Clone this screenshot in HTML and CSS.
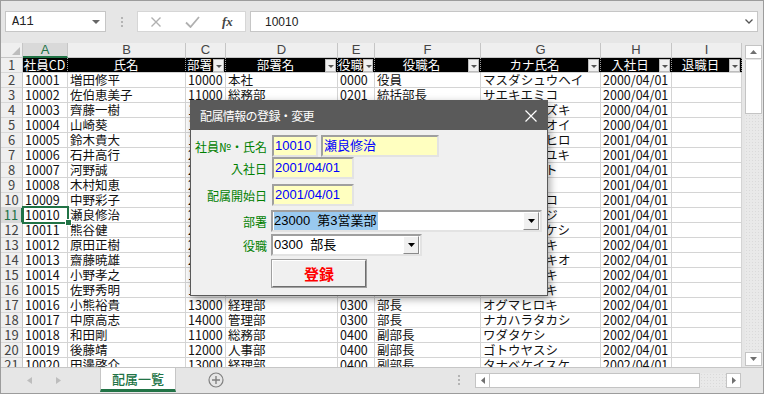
FILE: index.html
```html
<!DOCTYPE html>
<html lang="ja">
<head>
    <meta charset="UTF-8">
    <title>配属一覧</title>
    <link rel="stylesheet" href="styles.css">
</head>
<body>
<div class="app">
    <!-- formula bar -->
    <div class="formula-bar">
        <div class="name-box">
            <span>A11</span>
            <svg width="8" height="4" viewBox="0 0 8 4"><path d="M0 0h8L4 4z" fill="#666"/></svg>
        </div>
        <div class="grip"><i></i><i></i><i></i></div>
        <div class="fx-buttons">
            <svg width="12" height="10" viewBox="0 0 12 10"><path d="M1.5 0.5l9 9M10.5 0.5l-9 9" stroke="#b0b0b0" stroke-width="1.4" fill="none"/></svg>
            <svg width="15" height="12" viewBox="0 0 15 12"><path d="M1 6.5l4.5 4.5L14 1" stroke="#b0b0b0" stroke-width="1.8" fill="none"/></svg>
            <span class="fx">fx</span>
        </div>
        <div class="formula-input">
            <span>10010</span>
            <svg width="8" height="5" viewBox="0 0 8 5"><path d="M0.5 0.5l3.5 3.5 3.5-3.5" stroke="#555" stroke-width="1.3" fill="none"/></svg>
        </div>
    </div>

    <!-- sheet -->
    <div class="sheet">
        <div class="grid">
            <div class="row col-hdr">
                <div class="corner"><svg width="8" height="8" viewBox="0 0 8 8"><path d="M8 0v8H0z" fill="#bdbdbd"/></svg></div>
                <div class="on">A</div><div>B</div><div>C</div><div>D</div><div>E</div><div>F</div><div>G</div><div>H</div><div>I</div>
            </div>
            <div class="row title-row">
                <div class="rh">1</div>
                <div><span>社員CD</span></div>
                <div><span>氏名</span></div>
                <div><span>部署</span><b class="flt"></b></div>
                <div><span>部署名</span><b class="flt"></b></div>
                <div><span>役職</span><b class="flt"></b></div>
                <div><span>役職名</span><b class="flt"></b></div>
                <div><span>カナ氏名</span><b class="flt"></b></div>
                <div><span>入社日</span><b class="flt"></b></div>
                <div><span>退職日</span><b class="flt"></b></div>
            </div>
            <div class="row"><div class="rh">2</div><div>10001</div><div>増田修平</div><div>10000</div><div>本社</div><div>0000</div><div>役員</div><div>マスダシュウヘイ</div><div>2000/04/01</div><div></div></div>
            <div class="row"><div class="rh">3</div><div>10002</div><div>佐伯恵美子</div><div>11000</div><div>総務部</div><div>0201</div><div>統括部長</div><div>サエキエミコ</div><div>2000/04/01</div><div></div></div>
            <!-- rows 4-16: columns D-F lie under the form -->
            <div class="row"><div class="rh">4</div><div>10003</div><div>齊藤一樹</div><div>12000</div><div></div><div></div><div></div><div>サイトウカズキ</div><div>2000/04/01</div><div></div></div>
            <div class="row"><div class="rh">5</div><div>10004</div><div>山崎葵</div><div>13000</div><div></div><div></div><div></div><div>ヤマザキアオイ</div><div>2000/04/01</div><div></div></div>
            <div class="row"><div class="rh">6</div><div>10005</div><div>鈴木貴大</div><div>14000</div><div></div><div></div><div></div><div>スズキタカヒロ</div><div>2001/04/01</div><div></div></div>
            <div class="row"><div class="rh">7</div><div>10006</div><div>石井高行</div><div>21000</div><div></div><div></div><div></div><div>イシイタカユキ</div><div>2001/04/01</div><div></div></div>
            <div class="row"><div class="rh">8</div><div>10007</div><div>河野誠</div><div>22000</div><div></div><div></div><div></div><div>コウノマコト</div><div>2001/04/01</div><div></div></div>
            <div class="row"><div class="rh">9</div><div>10008</div><div>木村知恵</div><div>23000</div><div></div><div></div><div></div><div>キムラチエ</div><div>2001/04/01</div><div></div></div>
            <div class="row"><div class="rh">10</div><div>10009</div><div>中野彩子</div><div>21000</div><div></div><div></div><div></div><div>ナカノアヤコ</div><div>2001/04/01</div><div></div></div>
            <div class="row"><div class="rh on">11</div><div class="sel">10010</div><div>瀬良修治</div><div>23000</div><div></div><div></div><div></div><div>セラシュウジ</div><div>2001/04/01</div><div></div></div>
            <div class="row"><div class="rh">12</div><div>10011</div><div>熊谷健</div><div>22000</div><div></div><div></div><div></div><div>クマガイタケシ</div><div>2001/04/01</div><div></div></div>
            <div class="row"><div class="rh">13</div><div>10012</div><div>原田正樹</div><div>21000</div><div></div><div></div><div></div><div>ハラダマサキ</div><div>2002/04/01</div><div></div></div>
            <div class="row"><div class="rh">14</div><div>10013</div><div>齋藤暁雄</div><div>22000</div><div></div><div></div><div></div><div>サイトウアキオ</div><div>2002/04/01</div><div></div></div>
            <div class="row"><div class="rh">15</div><div>10014</div><div>小野孝之</div><div>11000</div><div></div><div></div><div></div><div>オノタカユキ</div><div>2002/04/01</div><div></div></div>
            <div class="row"><div class="rh">16</div><div>10015</div><div>佐野秀明</div><div>12000</div><div></div><div></div><div></div><div>サノヒデアキ</div><div>2002/04/01</div><div></div></div>
            <div class="row"><div class="rh">17</div><div>10016</div><div>小熊裕貴</div><div>13000</div><div>経理部</div><div>0300</div><div>部長</div><div>オグマヒロキ</div><div>2002/04/01</div><div></div></div>
            <div class="row"><div class="rh">18</div><div>10017</div><div>中原高志</div><div>14000</div><div>管理部</div><div>0300</div><div>部長</div><div>ナカハラタカシ</div><div>2002/04/01</div><div></div></div>
            <div class="row"><div class="rh">19</div><div>10018</div><div>和田剛</div><div>11000</div><div>総務部</div><div>0400</div><div>副部長</div><div>ワダタケシ</div><div>2002/04/01</div><div></div></div>
            <div class="row"><div class="rh">20</div><div>10019</div><div>後藤靖</div><div>12000</div><div>人事部</div><div>0400</div><div>副部長</div><div>ゴトウヤスシ</div><div>2002/04/01</div><div></div></div>
            <div class="row"><div class="rh">21</div><div>10020</div><div>田邊啓介</div><div>13000</div><div>経理部</div><div>0400</div><div>副部長</div><div>タナベケイスケ</div><div>2002/04/01</div><div></div></div>
        </div>

        <div class="vscroll">
            <div class="sb-btn"><svg width="7" height="4" viewBox="0 0 7 4"><path d="M0 4L3.5 0 7 4z" fill="#707070"/></svg></div>
            <div class="vthumb"></div>
            <div class="track"></div>
            <div class="sb-btn"><svg width="7" height="4" viewBox="0 0 7 4"><path d="M0 0h7L3.5 4z" fill="#707070"/></svg></div>
        </div>
    </div>

    <!-- sheet tabs -->
    <div class="tabbar">
        <div class="tab-nav">
            <svg width="5" height="7" viewBox="0 0 5 7"><path d="M5 0v7L0 3.5z" fill="#bdbdbd"/></svg>
            <svg width="5" height="7" viewBox="0 0 5 7"><path d="M0 0v7l5-3.5z" fill="#bdbdbd"/></svg>
        </div>
        <div class="tab">配属一覧</div>
        <div class="tab-add">
            <svg width="16" height="16" viewBox="0 0 16 16"><circle cx="8" cy="8" r="7" stroke="#808080" stroke-width="1.2" fill="none"/><path d="M8 4v8M4 8h8" stroke="#808080" stroke-width="1.4"/></svg>
        </div>
        <div class="grip tab-grip"><i></i><i></i><i></i></div>
        <div class="hscroll">
            <div class="sb-btn"><svg width="4" height="7" viewBox="0 0 4 7"><path d="M4 0v7L0 3.5z" fill="#707070"/></svg></div>
            <div class="hthumb"></div>
            <div class="track"></div>
            <div class="sb-btn"><svg width="4" height="7" viewBox="0 0 4 7"><path d="M0 0v7l4-3.5z" fill="#707070"/></svg></div>
        </div>
    </div>

    <!-- user form -->
    <div class="dialog">
        <div class="dlg-title">
            <span>配属情報の登録・変更</span>
            <svg width="12" height="12" viewBox="0 0 12 12"><path d="M0.5 0.5l11 11M11.5 0.5l-11 11" stroke="#fff" stroke-width="1.2"/></svg>
        </div>
        <div class="dlg-body">
            <div class="f-row r1">
                <label>社員№・氏名</label>
                <div class="tb w-no">10010</div>
                <div class="tb w-name">瀬良修治</div>
            </div>
            <div class="f-row r2">
                <label>入社日</label>
                <div class="tb w-date">2001/04/01</div>
            </div>
            <div class="f-row r3">
                <label>配属開始日</label>
                <div class="tb w-date">2001/04/01</div>
            </div>
            <div class="f-row r4">
                <label>部署</label>
                <div class="combo w-dept">
                    <span class="hl">23000&nbsp;&nbsp;第3営業部</span>
                    <div class="dd"><svg width="7" height="4" viewBox="0 0 7 4"><path d="M0 0h7L3.5 4z" fill="#000"/></svg></div>
                </div>
            </div>
            <div class="f-row r5">
                <label>役職</label>
                <div class="combo w-post">
                    <span>0300&nbsp;&nbsp;部長</span>
                    <div class="dd"><svg width="7" height="4" viewBox="0 0 7 4"><path d="M0 0h7L3.5 4z" fill="#000"/></svg></div>
                </div>
            </div>
            <div class="f-row r6">
                <label></label>
                <button class="btn-save">登録</button>
            </div>
        </div>
    </div>
</div>
</body>
</html>
```

FILE: styles.css
```css
/* Excel window with a VBA user form on top */
body {
    margin: 0;
    font-family: "Noto Sans CJK JP", sans-serif;
}

.app {
    position: relative;
    width: 764px;
    height: 394px;
    box-sizing: border-box;
    border: 1px solid #9c9c9c;
    background: #e6e6e6;
    display: flex;
    flex-direction: column;
    overflow: hidden;
}

/* ---- formula bar ---- */
.formula-bar {
    height: 42px;
    flex: none;
    display: flex;
    align-items: flex-start;
    padding: 10px 4px 0 4px;
    box-sizing: border-box;
}

.name-box {
    width: 101px;
    height: 21px;
    box-sizing: border-box;
    background: #fff;
    border: 1px solid #c6c6c6;
    display: flex;
    align-items: center;
    justify-content: space-between;
    padding: 0 5px 0 6px;
    font-family: "Liberation Mono", monospace;
    font-size: 12px;
    color: #222;
}

.grip {
    width: 31px;
    height: 21px;
    display: flex;
    flex-direction: column;
    align-items: center;
    justify-content: center;
    gap: 2px;
}

.grip i {
    width: 2px;
    height: 2px;
    background: #b4b4b4;
}

.fx-buttons {
    width: 109px;
    height: 21px;
    box-sizing: border-box;
    background: #fff;
    border: 1px solid #d6d6d6;
    display: flex;
    align-items: center;
    padding-left: 12px;
    gap: 23px;
}

.fx {
    font-family: "Liberation Serif", serif;
    font-style: italic;
    font-weight: bold;
    font-size: 13px;
    color: #444;
    margin-left: -1px;
}

.formula-input {
    margin-left: 4px;
    width: 508px;
    height: 21px;
    box-sizing: border-box;
    background: #fff;
    border: 1px solid #c6c6c6;
    display: flex;
    align-items: center;
    justify-content: space-between;
    padding: 0 4px 0 14px;
    font-family: "Liberation Sans", sans-serif;
    font-size: 12px;
    color: #222;
}

/* ---- sheet ---- */
.sheet {
    height: 324px;
    flex: none;
    display: flex;
}

.grid {
    width: 741px;
    overflow: hidden;
    background: #fff;
    font-family: "Liberation Sans Narrow", "Noto Sans CJK JP", sans-serif;
    font-size: 12.5px;
    color: #111;
}

.row {
    display: grid;
    grid-template-columns: 22px 45px 118px 40px 112px 37px 106px 120px 71px 70px;
    height: 15px;
}

.row > div {
    box-sizing: border-box;
    border-right: 1px solid #d4d4d4;
    border-bottom: 1px solid #d4d4d4;
    padding-left: 2px;
    line-height: 14px;
    white-space: nowrap;
}

.row > .rh {
    background: #efefef;
    border-right-color: #c6c6c6;
    border-bottom-color: #d8d8d8;
    padding: 0;
    text-align: center;
    color: #444;
    font-size: 13px;
}

.row > .rh.on {
    background: #d9d9d9;
    color: #217346;
    border-right: 2px solid #217346;
}

.col-hdr > div {
    background: #efefef;
    border-right-color: #c6c6c6;
    border-bottom-color: #c6c6c6;
    text-align: center;
    padding: 0;
    font-family: "Liberation Sans", sans-serif;
    font-size: 13px;
    color: #444;
}

.col-hdr > .corner {
    display: flex;
    align-items: flex-end;
    justify-content: flex-end;
    padding: 0 2px 2px 0;
}

.col-hdr > .on {
    background: #d9d9d9;
    color: #217346;
    border-bottom: 2px solid #217346;
    line-height: 13px;
}

.title-row > div:not(.rh) {
    background: #000;
    color: #fff;
    border-right: 1px dotted #9a9a9a;
    border-bottom-color: #d4d4d4;
    display: flex;
    align-items: center;
    padding: 0 1px 0 0;
}

.title-row span {
    flex: 1;
    text-align: center;
}

.flt {
    width: 11px;
    height: 13px;
    box-sizing: border-box;
    background: #f0f0f0;
    border: 1px solid #bdbdbd;
    position: relative;
}

.flt::after {
    content: "";
    position: absolute;
    left: 2px;
    top: 5px;
    border-left: 3px solid transparent;
    border-right: 3px solid transparent;
    border-top: 3px solid #555;
}

.row > .sel {
    position: relative;
}

.sel::after {
    content: "";
    position: absolute;
    left: -1px;
    top: -2px;
    width: 47px;
    height: 18px;
    box-sizing: border-box;
    border: 2px solid #217346;
    z-index: 1;
}

.sel::before {
    content: "";
    position: absolute;
    left: 42px;
    top: 11px;
    width: 5px;
    height: 5px;
    background: #217346;
    border: 1px solid #fff;
    z-index: 2;
}

/* scroll bars */
.vscroll {
    flex: 1;
    display: flex;
    flex-direction: column;
    padding: 2px 1px 1px 3px;
}

.sb-btn {
    background: #fff;
    border: 1px solid #c4c4c4;
    display: flex;
    align-items: center;
    justify-content: center;
    box-sizing: border-box;
}

.vscroll .sb-btn {
    height: 14px;
}

.vthumb {
    height: 53px;
    margin-top: 1px;
    background: #fff;
    border: 1px solid #c4c4c4;
    border-top: none;
}

.track {
    flex: 1;
    background-color: #e9e9e9;
    background-image: radial-gradient(#dadada 0.6px, transparent 0.8px);
    background-size: 3px 3px;
}

/* ---- tabs ---- */
.tabbar {
    flex: 1;
    display: flex;
    align-items: flex-start;
    border-top: 1px solid #c6c6c6;
}

.tab-nav {
    width: 99px;
    height: 24px;
    display: flex;
    align-items: center;
    padding-left: 26px;
    gap: 24px;
    box-sizing: border-box;
}

.tab {
    width: 76px;
    height: 24px;
    box-sizing: border-box;
    background: #fff;
    border-left: 1px solid #c6c6c6;
    border-right: 1px solid #c6c6c6;
    border-bottom: 3px solid #217346;
    text-align: center;
    line-height: 22px;
    font-size: 13px;
    font-weight: 500;
    color: #217346;
}

.tab-add {
    width: 80px;
    height: 24px;
    display: flex;
    align-items: center;
    padding-left: 32px;
    box-sizing: border-box;
}

.tab-grip {
    margin-left: 196px;
    width: 14px;
    height: 24px;
}

.hscroll {
    margin-left: 9px;
    margin-top: 5px;
    width: 266px;
    height: 15px;
    display: flex;
}

.hscroll .sb-btn {
    width: 15px;
}

.hthumb {
    width: 210px;
    background: #fff;
    border: 1px solid #c4c4c4;
    border-left: none;
    box-sizing: border-box;
}

/* ---- user form ---- */
.dialog {
    position: absolute;
    left: 189px;
    top: 99px;
    width: 358px;
    height: 196px;
    box-sizing: border-box;
    border: 1px solid #5a5a5a;
    background: #f0f0f0;
    box-shadow: 2px 3px 8px rgba(0, 0, 0, 0.35);
    display: flex;
    flex-direction: column;
    z-index: 5;
}

.dlg-title {
    height: 29px;
    flex: none;
    background: #5a5a5a;
    color: #fff;
    display: flex;
    align-items: center;
    justify-content: space-between;
    padding: 0 10px 0 9px;
    font-size: 12px;
    letter-spacing: -0.6px;
}

.dlg-body {
    padding-top: 5px;
    display: flex;
    flex-direction: column;
}

.f-row {
    display: flex;
    align-items: center;
    height: 22px;
}

.f-row label {
    width: 80px;
    padding-right: 4px;
    box-sizing: border-box;
    text-align: right;
    color: #008000;
    font-size: 12px;
    white-space: nowrap;
}

.r3 { margin-top: 5px; }
.r4 { margin-top: 4px; }
.r5 { margin-top: 2px; }
.r6 { margin-top: 3px; height: 29px; }

.tb,
.combo {
    height: 22px;
    box-sizing: border-box;
    border: 2px solid;
    border-color: #9f9f9f #e3e3e3 #e3e3e3 #9f9f9f;
    font-size: 13px;
    line-height: 18px;
    padding-left: 1px;
    white-space: nowrap;
}

.tb {
    background: #ffffc0;
    color: #0000ff;
    font-family: "Liberation Sans", "Noto Sans CJK JP", sans-serif;
}

.w-no { width: 46px; margin-left: 1px; }
.w-name { width: 118px; margin-left: 3px; }
.w-date { width: 82px; margin-left: 1px; }

.combo {
    background: #fff;
    color: #000;
    display: flex;
    align-items: center;
    justify-content: space-between;
    font-family: "Liberation Sans", "Noto Sans CJK JP", sans-serif;
    padding-right: 1px;
}

.w-dept { width: 271px; }
.w-post { width: 151px; }

.hl {
    background: #99c9ef;
    padding-right: 1px;
}

.dd {
    width: 16px;
    height: 18px;
    box-sizing: border-box;
    background: #f0f0f0;
    border: 1px solid;
    border-color: #fff #8a8a8a #8a8a8a #fff;
    display: flex;
    align-items: center;
    justify-content: center;
}

.btn-save {
    width: 96px;
    height: 29px;
    box-sizing: border-box;
    background: #f0f0f0;
    border: 2px solid;
    border-color: #fff #6e6e6e #6e6e6e #fff;
    outline: 1px solid #a0a0a0;
    outline-offset: -1px;
    color: #ff0000;
    font-family: "Noto Sans CJK JP", sans-serif;
    font-weight: bold;
    font-size: 15px;
    padding: 0;
}
```
